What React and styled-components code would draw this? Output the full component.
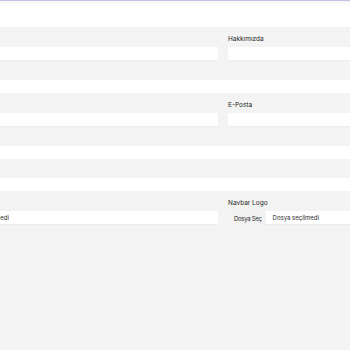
import React from "react";
import styled, { createGlobalStyle } from "styled-components";

const GlobalStyle = createGlobalStyle`
  html, body {
    margin: 0;
    padding: 0;
    background: #ffffff;
    overflow: hidden;
  }
  body {
    font-family: Inter, "Noto Sans", sans-serif;
    color: #222;
  }
`;

const Page = styled.div`
  display: flex;
  flex-direction: column;
  height: 350px;
`;

const TopBar = styled.div`
  height: 27px;
  flex: none;
  box-sizing: border-box;
  border-top: 1px solid #c6bfe8;
  background: linear-gradient(#f7f7fa 0, #ffffff 6px);
`;

const Form = styled.div`
  flex: 1;
  display: flex;
  flex-direction: column;
  gap: 13px;
  margin-left: -82px;
  width: 610px;
`;

const Row = styled.div`
  background: #f3f3f3;
  display: grid;
  grid-template-columns: 300px 300px;
  column-gap: 10px;
  box-sizing: border-box;
  padding: ${(p) => (p.$empty ? "0" : "7px 0 19px")};
  height: ${(p) => (p.$empty ? "19px" : "auto")};
  flex: ${(p) => (p.$grow ? "1" : "none")};
  align-content: start;
`;

const Field = styled.div`
  display: flex;
  flex-direction: column;
  gap: 3px;
`;

const Label = styled.label`
  font-size: 6.5px;
  line-height: 10px;
  height: 10px;
  white-space: nowrap;
  color: #1e1e1e;
`;

const Input = styled.div`
  height: 14px;
  background: #ffffff;
  box-sizing: border-box;
  border-bottom: 1px solid #ececec;
`;

const FileBox = styled.div`
  height: 14px;
  display: flex;
  align-items: center;
  font-size: 6px;
  color: #2a2a2a;
  white-space: nowrap;
`;

const FileButton = styled.span`
  flex: none;
  height: 14px;
  box-sizing: border-box;
  padding: 0 4px 0 6px;
  letter-spacing: -0.3px;
  display: flex;
  align-items: center;
  background: #f2f2f2;
`;

const FileName = styled.span`
  flex: 1;
  height: 14px;
  box-sizing: border-box;
  padding-left: 7px;
  display: flex;
  align-items: center;
  background: #ffffff;
  border-bottom: 1px solid #ececec;
`;

function FileInput() {
  return (
    <FileBox>
      <FileButton>Dosya Seç</FileButton>
      <FileName>Dosya seçilmedi</FileName>
    </FileBox>
  );
}

export default function App() {
  return (
    <>
      <GlobalStyle />
      <Page>
        <TopBar />
        <Form>
          <Row>
            <Field>
              <Label>Başlık</Label>
              <Input />
            </Field>
            <Field>
              <Label>Hakkımızda</Label>
              <Input />
            </Field>
          </Row>
          <Row>
            <Field>
              <Label>Telefon</Label>
              <Input />
            </Field>
            <Field>
              <Label>E-Posta</Label>
              <Input />
            </Field>
          </Row>
          <Row $empty />
          <Row $grow>
            <Field>
              <Label>Favicon</Label>
              <FileInput />
            </Field>
            <Field>
              <Label>Navbar Logo</Label>
              <FileInput />
            </Field>
          </Row>
        </Form>
      </Page>
    </>
  );
}
